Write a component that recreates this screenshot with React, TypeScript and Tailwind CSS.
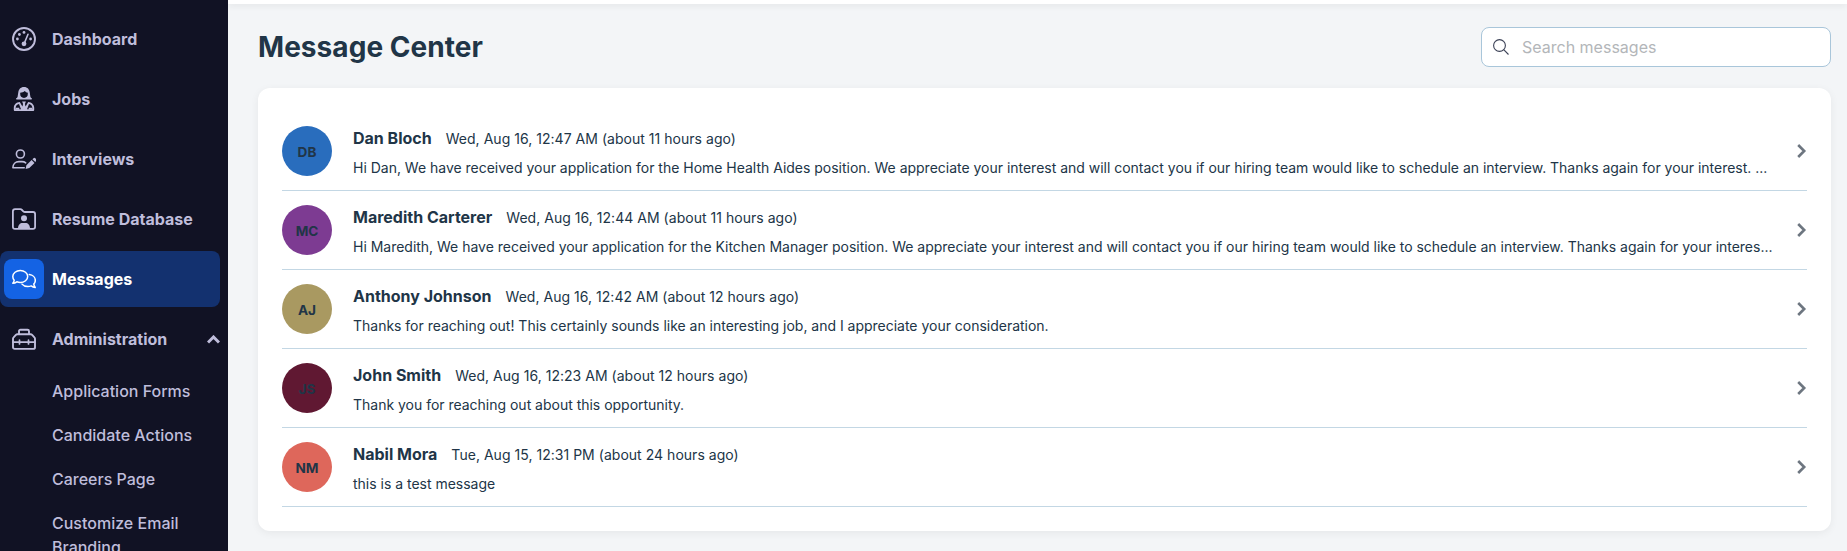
import type { ReactNode } from "react"

const iconProps = {
  width: 24,
  height: 24,
  viewBox: "0 0 24 24",
  fill: "none",
  stroke: "currentColor",
  strokeLinecap: "round" as const,
  strokeLinejoin: "round" as const,
}

function GaugeIcon() {
  return (
    <svg {...iconProps} strokeWidth="1.9">
      <circle cx="12" cy="12" r="11" />
      <path d="M12.3 16.2 16 7.3" strokeWidth="1.6" />
      <g fill="currentColor" stroke="none">
        <circle cx="12" cy="16.8" r="2.4" />
        <circle cx="12" cy="5.4" r="1.4" />
        <circle cx="7.4" cy="7.5" r="1.4" />
        <circle cx="5.4" cy="12" r="1.4" />
        <circle cx="18.6" cy="12" r="1.4" />
      </g>
    </svg>
  )
}

function JobsIcon() {
  return (
    <svg {...iconProps} stroke="none" fill="currentColor">
      <path
        fillRule="evenodd"
        d="M12 0C8.400 0 6.700 2.500 6.300 5.300L5.600 9.700C5.400 10.500 4.900 10.900 4.300 11.300C3.700 11.800 4 12.500 4.700 12.500H19.300C20 12.500 20.300 11.800 19.700 11.300C19.100 10.900 18.600 10.500 18.400 9.700L17.700 5.300C17.300 2.500 15.600 0 12 0ZM8.200 5.700C9.900 5.700 11.600 5.200 12.800 4C13.500 5 14.500 5.600 15.800 5.800V7.100A3.800 3.800 0 0 1 8.200 7.100Z"
      />
      <path
        fillRule="evenodd"
        d="M7.800 15C4.400 15.300 1.800 17.600 1.800 20.800V22.700C1.800 23.400 2.300 24 3 24H21C21.700 24 22.200 23.400 22.200 22.700V20.800C22.200 17.600 19.600 15.300 16.200 15L13.600 19.600L12.900 17L13.900 14.400H10.100L11.100 17L10.400 19.600ZM7 17L9 22.200H3.700V20.800C3.700 18.900 5 17.500 7 17ZM17 17C19 17.500 20.300 18.900 20.300 20.800V22.200H15Z"
      />
      <path d="M3.700 20.800h3.600v2H3.700zM16.700 20.800h3.600v2h-3.600z" />
    </svg>
  )
}

function InterviewIcon() {
  return (
    <svg {...iconProps} strokeWidth="1.6">
      <circle cx="8.400" cy="7" r="4" />
      <path d="M12.200 20.800H.9C.9 17 3.500 14.600 7 14.600H10C11.500 14.600 12.700 15 13.700 15.800" />
      <path
        d="M13.600 22 14.400 18.200 19.600 13 22.500 15.900 17.300 21.100ZM20.400 12.200 21.500 11.200A1.300 1.300 0 0 1 23.300 11.200L24 12A1.300 1.300 0 0 1 24 14L23.300 15.100Z"
        fill="currentColor"
        stroke="none"
      />
    </svg>
  )
}

function FolderIcon() {
  return (
    <svg {...iconProps} strokeWidth="1.8">
      <path d="M3 2.200H8.300C9 2.200 9.500 2.500 10 3L11.300 4.300C11.800 4.800 12.300 5 13 5H21A2.100 2.100 0 0 1 23.100 7.100V19.800A2.100 2.100 0 0 1 21 21.900H3A2.100 2.100 0 0 1 .9 19.800V4.300A2.100 2.100 0 0 1 3 2.200Z" />
      <circle cx="12" cy="11.200" r="3" fill="currentColor" stroke="none" />
      <path d="M6 21.500C6 18 8 16 10.500 16H13.500C16 16 18 18 18 21.500Z" fill="currentColor" stroke="none" />
    </svg>
  )
}

function MessagesIcon() {
  return (
    <svg {...iconProps} strokeWidth="1.500">
      <path d="M8.300 3.500C12.400 3.500 15.700 6.200 15.700 9.500S12.400 15.500 8.300 15.500C7 15.500 5.800 15.200 4.800 14.800C3.700 15.600 2.300 16.200.8 16.200C1.500 15.400 2.100 14.400 2.200 13.200C1.300 12.200.8 10.900.8 9.500C.8 6.200 4.200 3.500 8.300 3.500Z" />
      <path d="M17.300 7.600C20.700 8 23.300 10.400 23.300 13.400C23.300 14.800 22.700 16.100 21.800 17.100C21.900 18.300 22.500 19.400 23.200 20.500C21.700 20.400 20.300 19.800 19.200 18.900C18.200 19.300 17 19.500 15.800 19.500C13.300 19.500 11.200 18.600 10 17.100" />
    </svg>
  )
}

function ToolboxIcon() {
  return (
    <svg {...iconProps} strokeWidth="1.900">
      <path d="M7 7V4.200C7 3.300 7.600 2.700 8.500 2.700H15.500C16.400 2.700 17 3.300 17 4.200V7" />
      <path d="M5.400 7.200H18.600C19.200 7.200 19.700 7.400 20.100 7.800L22.400 10.300C22.800 10.700 23 11.200 23 11.800V20.200C23 21.200 22.300 21.900 21.300 21.900H2.700C1.700 21.900 1 21.200 1 20.200V11.800C1 11.200 1.200 10.700 1.600 10.300L3.900 7.800C4.300 7.400 4.800 7.200 5.400 7.200Z" />
      <path d="M1 15.200H23M7.500 13V17M16.500 13V17" strokeWidth="1.700" />
    </svg>
  )
}

function NavItem({ icon, label, active, open }: { icon: ReactNode; label: string; active?: boolean; open?: boolean }) {
  return (
    <a
      className={
        active
          ? "flex h-14 w-[220px] items-center rounded-lg bg-[#13316f] pl-1 text-white"
          : "flex h-14 w-[220px] items-center pl-1"
      }
    >
      <span
        className={
          active
            ? "flex size-10 items-center justify-center rounded-lg bg-[#1463e4]"
            : "flex size-10 items-center justify-center"
        }
      >
        {icon}
      </span>
      <span className="ml-2 flex-1 font-bold">{label}</span>
      {open && (
        <svg width="13" height="9" viewBox="0 0 13 9" fill="none" stroke="currentColor" strokeWidth="3">
          <path d="M1 7.500 6.500 2 12 7.500" />
        </svg>
      )}
    </a>
  )
}

const adminLinks = ["Application Forms", "Candidate Actions", "Careers Page", "Customize Email Branding"]

const messages = [
  {
    initials: "DB",
    color: "bg-[#296dbd]",
    name: "Dan Bloch",
    date: "Wed, Aug 16, 12:47 AM (about 11 hours ago)",
    body: "Hi Dan, We have received your application for the Home Health Aides position. We appreciate your interest and will contact you if our hiring team would like to schedule an interview. Thanks again for your interest. ...",
  },
  {
    initials: "MC",
    color: "bg-[#7d3b92]",
    name: "Maredith Carterer",
    date: "Wed, Aug 16, 12:44 AM (about 11 hours ago)",
    body: "Hi Maredith, We have received your application for the Kitchen Manager position. We appreciate your interest and will contact you if our hiring team would like to schedule an interview. Thanks again for your interes...",
  },
  {
    initials: "AJ",
    color: "bg-[#a99961]",
    name: "Anthony Johnson",
    date: "Wed, Aug 16, 12:42 AM (about 12 hours ago)",
    body: "Thanks for reaching out! This certainly sounds like an interesting job, and I appreciate your consideration.",
  },
  {
    initials: "JS",
    color: "bg-[#601832]",
    name: "John Smith",
    date: "Wed, Aug 16, 12:23 AM (about 12 hours ago)",
    body: "Thank you for reaching out about this opportunity.",
  },
  {
    initials: "NM",
    color: "bg-[#de675b]",
    name: "Nabil Mora",
    date: "Tue, Aug 15, 12:31 PM (about 24 hours ago)",
    body: "this is a test message",
  },
]

export default function App() {
  return (
    <div className="flex h-[551px] w-full overflow-hidden bg-[#f3f5f7] font-['Inter',sans-serif] text-base text-[#213547]">
      {/* Sidebar */}
      <nav className="w-[228px] shrink-0 overflow-hidden bg-[#111224] pt-[11px] text-[#bfbddb]">
        <div className="flex flex-col gap-1">
          <NavItem icon={<GaugeIcon />} label="Dashboard" />
          <NavItem icon={<JobsIcon />} label="Jobs" />
          <NavItem icon={<InterviewIcon />} label="Interviews" />
          <NavItem icon={<FolderIcon />} label="Resume Database" />
          <NavItem icon={<MessagesIcon />} label="Messages" active />
          <NavItem icon={<ToolboxIcon />} label="Administration" open />
        </div>
        <div className="mt-0.5 flex flex-col pr-8 pl-[52px]">
          {adminLinks.map((link) => (
            <a key={link} className="py-2.5 font-medium">
              {link}
            </a>
          ))}
        </div>
      </nav>

      {/* Content */}
      <main className="min-w-0 flex-1">
        <div className="h-1 bg-white shadow-[0_2px_6px_rgba(0,0,0,0.08)]" />
        <div className="pr-4 pl-[30px]">
          <div className="flex h-[84px] items-center justify-between pt-0.5">
            <h1 className="text-[28px] leading-none font-bold tracking-[0.05px]">Message Center</h1>
            <div className="flex h-10 w-[350px] items-center rounded-lg border border-[#a9c6da] bg-white pl-[11px]">
              <svg width="16" height="16" viewBox="0 0 16 16" fill="none" stroke="#3c4257" strokeWidth="1.1">
                <circle cx="6.500" cy="6.500" r="5.900" />
                <path d="M10.700 10.700 15.500 15.500" />
              </svg>
              <span className="ml-[13px] text-[#b3b6b9]">Search messages</span>
            </div>
          </div>

          <div className="rounded-xl bg-white p-6 shadow-[0_2px_8px_rgba(0,0,0,0.06)]">
            {messages.map((msg) => (
              <div key={msg.initials} className="flex h-[79px] items-center border-b border-[#c3d7e4]">
                <div className={`flex size-[50px] shrink-0 items-center justify-center rounded-full pt-0.5 text-[13.6px] font-bold ${msg.color}`}>
                  {msg.initials}
                </div>
                <div className="ml-[21px] min-w-0 flex-1 pt-px">
                  <div className="flex items-baseline gap-3.5">
                    <span className="font-bold">{msg.name}</span>
                    <span className="text-sm tracking-[0.03px]">{msg.date}</span>
                  </div>
                  <div className="mt-2 text-sm tracking-[-0.014px] whitespace-nowrap">{msg.body}</div>
                </div>
                <svg width="10" height="14" viewBox="0 0 10 14" fill="none" stroke="#6d7680" strokeWidth="2.600" className="shrink-0">
                  <path d="M1.200 1 7.200 7 1.200 13" />
                </svg>
              </div>
            ))}
          </div>
        </div>
      </main>
    </div>
  )
}
